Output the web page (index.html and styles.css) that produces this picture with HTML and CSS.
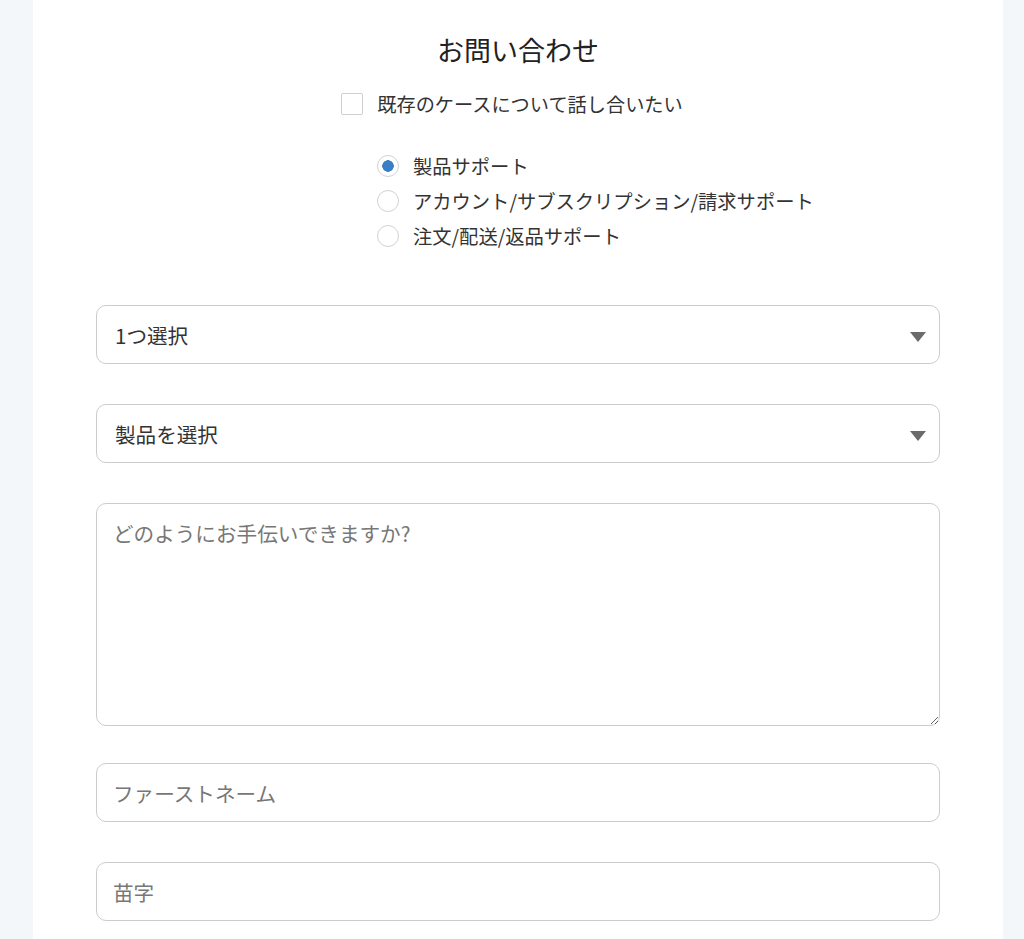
FILE: index.html
```html
<!DOCTYPE html>
<html lang="ja">
<head>
    <meta charset="UTF-8">
    <meta name="viewport" content="width=device-width, initial-scale=1.0">
    <title>お問い合わせ</title>
    <link rel="stylesheet" href="styles.css">
</head>
<body>
    <div class="container">
        <h1>お問い合わせ</h1>

        <label class="check-row">
            <input type="checkbox" id="existing">
            <span>既存のケースについて話し合いたい</span>
        </label>

        <div class="radio-group">
            <label class="radio-row">
                <input type="radio" name="topic" checked>
                <span>製品サポート</span>
            </label>
            <label class="radio-row">
                <input type="radio" name="topic">
                <span>アカウント/サブスクリプション/請求サポート</span>
            </label>
            <label class="radio-row">
                <input type="radio" name="topic">
                <span>注文/配送/返品サポート</span>
            </label>
        </div>

        <div class="form-group select-wrap">
            <select id="category">
                <option>1つ選択</option>
            </select>
            <svg class="arrow" width="16" height="10" viewBox="0 0 16 10"><path d="M0 0h16L8 10z" fill="#6b6b6b"/></svg>
        </div>

        <div class="form-group select-wrap">
            <select id="product">
                <option>製品を選択</option>
            </select>
            <svg class="arrow" width="16" height="10" viewBox="0 0 16 10"><path d="M0 0h16L8 10z" fill="#6b6b6b"/></svg>
        </div>

        <div class="form-group">
            <textarea id="message" placeholder="どのようにお手伝いできますか?"></textarea>
        </div>

        <div class="form-group">
            <input type="text" id="first" placeholder="ファーストネーム">
        </div>

        <div class="form-group">
            <input type="text" id="last" placeholder="苗字">
        </div>
    </div>
</body>
</html>
```

FILE: styles.css
```css
body {
    margin: 0;
    background-color: #f4f7fa;
    font-family: "Noto Sans CJK JP", "Noto Sans", sans-serif;
    color: #333;
}
.container {
    background-color: white;
    margin: 0 21px 0 33px;
    padding: 32px 63px 18px;
    display: flex;
    flex-direction: column;
}
h1 {
    margin: 0;
    font-size: 27px;
    font-weight: 400;
    line-height: 36px;
    text-align: center;
    color: #222;
}
.check-row {
    align-self: center;
    display: flex;
    align-items: center;
    gap: 14px;
    margin-top: 25px;
    margin-left: -12px;
    font-size: 19.2px;
    line-height: 22px;
}
.check-row input {
    appearance: none;
    margin: 0;
    width: 22px;
    height: 22px;
    border: 1px solid #cfcfcf;
    border-radius: 2px;
    background: white;
}
.radio-group {
    margin: 33px 0 0 281px;
}
.radio-row {
    display: flex;
    align-items: center;
    gap: 14px;
    height: 35px;
    font-size: 19.3px;
}
.radio-row input {
    appearance: none;
    margin: 0;
    width: 22px;
    height: 22px;
    border: 1px solid #d2d2d2;
    border-radius: 50%;
    background: white;
}
.radio-row input:checked {
    background: radial-gradient(circle, #3a7ec6 0 5.5px, white 6px);
}
.form-group {
    margin-bottom: 40px;
}
.radio-group + .form-group {
    margin-top: 52px;
}
.form-group:last-child {
    margin-bottom: 0;
}
.select-wrap {
    position: relative;
}
select,
input[type="text"],
textarea {
    display: block;
    width: 100%;
    box-sizing: border-box;
    border: 1px solid #cccccc;
    border-radius: 10px;
    background: white;
    font-family: inherit;
    font-size: 20.6px;
    color: #333;
}
select {
    appearance: none;
    height: 59px;
    padding: 0 40px 0 18px;
}
.arrow {
    position: absolute;
    right: 14px;
    top: 27px;
}
textarea {
    height: 223px;
    padding: 14px 16px;
    line-height: 30px;
    resize: vertical;
    margin-bottom: -3px;
}
input[type="text"] {
    height: 59px;
    padding: 0 16px;
}
::placeholder {
    color: #777;
}
```
